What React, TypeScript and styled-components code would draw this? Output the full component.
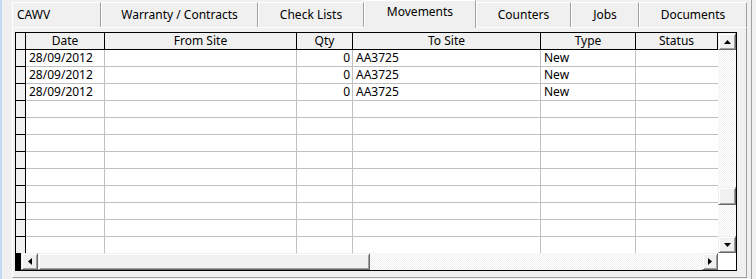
import React from "react";
import styled, { createGlobalStyle, css } from "styled-components";

const GlobalStyle = createGlobalStyle`
    html, body {
        margin: 0;
        padding: 0;
        background: #f0f0f0;
    }
    body {
        font-family: "Noto Sans", "DejaVu Sans", sans-serif;
        font-size: 12px;
        color: #000;
    }
`;

const Window = styled.div`
    width: 756px;
    height: 279px;
    box-sizing: border-box;
    display: flex;
    border-left: 2px solid #c5dbf1;
    padding-left: 10px;
    overflow: hidden;
`;

const Frame = styled.div`
    display: flex;
    padding-right: 4px;
    border-right: 1px solid #a0a0a0;
    height: 279px;
`;

const TabControl = styled.div`
    width: 735px;
    display: flex;
    flex-direction: column;
`;

const TabStrip = styled.div`
    display: flex;
    align-items: flex-end;
    height: 27px;
`;

interface ITab {
    active?: boolean;
    w: number;
    left?: boolean;
}

const Tab = styled.div<ITab>`
    box-sizing: border-box;
    width: ${({ w }) => w}px;
    height: 25px;
    display: flex;
    align-items: center;
    justify-content: ${({ left }) => (left ? "flex-start" : "center")};
    padding: ${({ left }) => (left ? "0 0 2px 4px" : "0 0 2px 0")};
    background: #f0f0f0;
    border-top: 1px solid #fff;
    border-left: 1px solid #fff;
    border-right: 1px solid #a0a0a0;
    white-space: nowrap;
    ${({ active }) =>
        active &&
        css`
            height: 28px;
            margin-bottom: -1px;
            padding-bottom: 6px;
            position: relative;
            z-index: 1;
            background: #f0f0f0;
        `}
`;

const Panel = styled.div`
    box-sizing: border-box;
    height: 251px;
    border-top: 1px solid #fff;
    border-left: 1px solid #fff;
    border-right: 1px solid #a0a0a0;
    border-bottom: 1px solid #a0a0a0;
    padding: 4px 0 0 2px;
`;

const Grid = styled.div`
    width: 722px;
    height: 239px;
    box-sizing: border-box;
    border: 1px solid #000;
    background: #fff;
    display: grid;
    grid-template-columns: 702px 18px;
    grid-template-rows: 220px 17px;
`;

const Body = styled.div`
    display: flex;
    flex-direction: column;
    overflow: hidden;
`;

const COLS = "10px 79px 192px 56px 188px 95px 82px";

const HeaderRow = styled.div`
    display: grid;
    grid-template-columns: ${COLS};
    height: 17px;
    flex: none;
`;

const Rows = styled.div`
    height: 203px;
    overflow: hidden;
`;

const Row = styled.div`
    display: grid;
    grid-template-columns: ${COLS};
    height: 17px;
`;

const HeadCell = styled.div`
    box-sizing: border-box;
    background: #f0f0f0;
    border-right: 1px solid #000;
    border-bottom: 1px solid #000;
    line-height: 16px;
    text-align: center;
    white-space: nowrap;
    overflow: hidden;
`;

const Selector = styled.div`
    box-sizing: border-box;
    background: #f0f0f0;
    border-right: 1px solid #000;
    border-bottom: 1px solid #000;
`;

interface ICell {
    align?: "left" | "right";
    last?: boolean;
}

const Cell = styled.div<ICell>`
    box-sizing: border-box;
    border-right: ${({ last }) => (last ? "none" : "1px solid #c0c0c0")};
    border-bottom: 1px solid #c0c0c0;
    line-height: 16px;
    text-align: ${({ align }) => align ?? "left"};
    padding: ${({ align }) => (align === "right" ? "0 2px 0 0" : "0 0 0 3px")};
    white-space: nowrap;
    overflow: hidden;
`;

const checker = css`
    background: repeating-conic-gradient(#f0f0f0 0 25%, #fff 0 50%) 0 0 / 2px 2px;
`;

const raised = css`
    box-sizing: border-box;
    background: #f0f0f0;
    border-top: 1px solid #f0f0f0;
    border-left: 1px solid #f0f0f0;
    border-right: 1px solid #696969;
    border-bottom: 1px solid #696969;
    box-shadow: inset 1px 1px 0 #fff, inset -1px -1px 0 #a0a0a0;
    display: flex;
    align-items: center;
    justify-content: center;
`;

const VScroll = styled.div`
    display: flex;
    flex-direction: column;
    ${checker}
`;

const VButton = styled.div`
    ${raised}
    height: 17px;
    flex: none;
`;

const VTrack = styled.div`
    flex: 1;
    display: flex;
    flex-direction: column;
`;

const VThumb = styled.div`
    ${raised}
    height: 18px;
    margin-top: 137px;
`;

const HScroll = styled.div`
    display: flex;
    ${checker}
`;

const BlackCorner = styled.div`
    width: 5px;
    background: #000;
`;

interface IHButton {
    w: number;
}

const HButton = styled.div<IHButton>`
    ${raised}
    width: ${({ w }) => w}px;
    flex: none;
`;

const HThumb = styled.div`
    ${raised}
    width: 332px;
    flex: none;
`;

const WhiteCorner = styled.div`
    background: #fff;
`;

const Arrow = ({ dir }: { dir: "up" | "down" | "left" | "right" }) => {
    const pts = {
        up: "0,4 7,4 3.5,0",
        down: "0,0 7,0 3.5,4",
        left: "4,0 4,7 0,3.5",
        right: "0,0 0,7 4,3.5",
    }[dir];
    const vertical = dir === "up" || dir === "down";
    return (
        <svg width={vertical ? 7 : 4} height={vertical ? 4 : 7}>
            <polygon points={pts} fill="#000" />
        </svg>
    );
};

const tabs = [
    { label: "CAWV", w: 89, left: true },
    { label: "Warranty / Contracts", w: 157 },
    { label: "Check Lists", w: 106 },
    { label: "Movements", w: 112, active: true },
    { label: "Counters", w: 95 },
    { label: "Jobs", w: 68 },
    { label: "Documents", w: 108 },
];

const columns = ["Date", "From Site", "Qty", "To Site", "Type", "Status"];

const data = [
    { date: "28/09/2012", from: "", qty: "0", to: "AA3725", type: "New", status: "" },
    { date: "28/09/2012", from: "", qty: "0", to: "AA3725", type: "New", status: "" },
    { date: "28/09/2012", from: "", qty: "0", to: "AA3725", type: "New", status: "" },
];

const App = () => {
    const rows = [...data];
    while (rows.length < 12) {
        rows.push({ date: "", from: "", qty: "", to: "", type: "", status: "" });
    }

    return (
        <>
            <GlobalStyle />
            <Window>
                <Frame>
                    <TabControl>
                        <TabStrip>
                            {tabs.map((t) => (
                                <Tab key={t.label} w={t.w} active={t.active} left={t.left}>
                                    {t.label}
                                </Tab>
                            ))}
                        </TabStrip>
                        <Panel>
                            <Grid>
                                <Body>
                                    <HeaderRow>
                                        <Selector />
                                        {columns.map((c) => (
                                            <HeadCell key={c}>{c}</HeadCell>
                                        ))}
                                    </HeaderRow>
                                    <Rows>
                                        {rows.map((r, i) => (
                                            <Row key={i}>
                                                <Selector />
                                                <Cell>{r.date}</Cell>
                                                <Cell>{r.from}</Cell>
                                                <Cell align="right">{r.qty}</Cell>
                                                <Cell>{r.to}</Cell>
                                                <Cell>{r.type}</Cell>
                                                <Cell last>{r.status}</Cell>
                                            </Row>
                                        ))}
                                    </Rows>
                                </Body>
                                <VScroll>
                                    <VButton>
                                        <Arrow dir="up" />
                                    </VButton>
                                    <VTrack>
                                        <VThumb />
                                    </VTrack>
                                    <VButton>
                                        <Arrow dir="down" />
                                    </VButton>
                                </VScroll>
                                <HScroll>
                                    <BlackCorner />
                                    <HButton w={17}>
                                        <Arrow dir="left" />
                                    </HButton>
                                    <HThumb />
                                    <div style={{ flex: 1 }} />
                                    <HButton w={16}>
                                        <Arrow dir="right" />
                                    </HButton>
                                </HScroll>
                                <WhiteCorner />
                            </Grid>
                        </Panel>
                    </TabControl>
                </Frame>
            </Window>
        </>
    );
};

export default App;
